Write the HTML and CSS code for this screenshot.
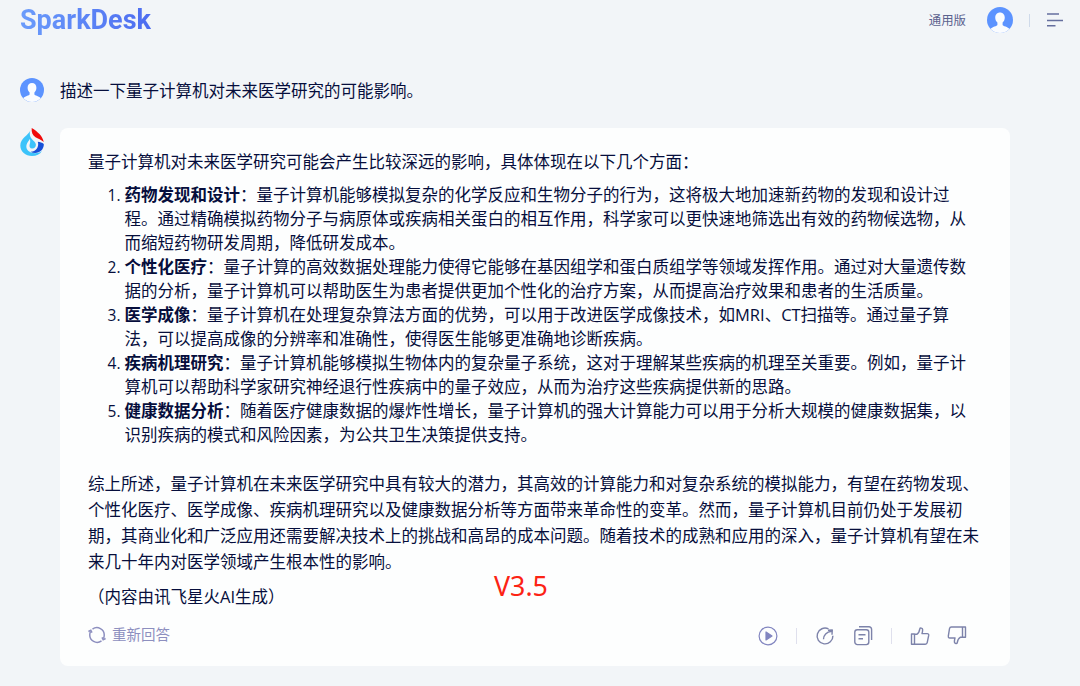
FILE: index.html
```
<!DOCTYPE html>
<html lang="zh-CN">
<head>
    <meta charset="UTF-8">
    <meta name="viewport" content="width=device-width, initial-scale=1.0">
    <title>SparkDesk</title>
    <link rel="stylesheet" href="styles.css">
</head>
<body>

    <header class="header">
        <div class="logo">SparkDesk</div>
        <div class="header-right">
            <span class="version">通用版</span>
            <svg class="avatar-large" viewBox="0 0 24 24">
                <circle cx="12" cy="12" r="12" fill="#5c93ff"/>
                <path d="M12 5c-2.700 0-4.400 2-4.400 4.700 0 2 .8 3.600 2 4.700v2.100c0 .9-5.200 1.700-6.300 3.800A12 12 0 0 0 12 24a12 12 0 0 0 8.700-3.700c-1.100-2.100-6.300-2.900-6.300-3.800v-2.100c1.200-1.100 2-2.700 2-4.700C16.400 7 14.700 5 12 5z" fill="#fafcff"/>
            </svg>
            <span class="header-line"></span>
            <svg class="menu-icon" viewBox="0 0 16 14">
                <path d="M0 1h12M0 7.500h16M0 12.800h8.500" stroke="#656f9e" stroke-width="1.400" fill="none"/>
            </svg>
        </div>
    </header>

    <main class="chat">
        <!-- Question -->
        <div class="row question">
            <svg class="avatar" viewBox="0 0 24 24">
                <circle cx="12" cy="12" r="12" fill="#5c93ff"/>
                <path d="M12 5c-2.700 0-4.400 2-4.400 4.700 0 2 .8 3.600 2 4.700v2.100c0 .9-5.200 1.700-6.300 3.800A12 12 0 0 0 12 24a12 12 0 0 0 8.700-3.700c-1.100-2.100-6.300-2.900-6.300-3.800v-2.100c1.200-1.100 2-2.700 2-4.700C16.400 7 14.700 5 12 5z" fill="#fafcff"/>
            </svg>
            <p class="question-text">描述一下量子计算机对未来医学研究的可能影响。</p>
        </div>

        <!-- Answer -->
        <div class="row">
            <svg class="spark-icon" viewBox="0 0 24 28">
                <path d="M10.300 2.500C8.500 7 .3 10.500.3 17.500.3 23.500 5.500 28 12 28c4.300 0 8-1.800 10-5-3.200 2.200-6.800 2.600-10 1.700-4.200-1.200-6.300-4.200-5.500-7.700.6-2.500 2.300-4 3.200-6 .8 1.800.6 3.500 0 5.200-.7 2.300.3 4.300 2.300 4.400 2.200.1 4-1.500 3.900-3.900-.2-3.200-4.400-4.700-5.600-8.200-.7-2.100-.6-4 0-6z" fill="#3cc3fa"/>
                <path d="M11.700 0c5.800 3.500 11 8 12 14-2.500-2.400-5.700-3-8.200-4.700C12.500 7.200 11.300 4.200 11.700 0z" fill="#f00a0a"/>
                <path d="M17.800 13.800c2.300.1 4.300.9 6 2.200.2 5.200-3.900 9-8.700 9-1.800 0-3.300-.4-4.600-1.200 5 .2 9-4.500 7.300-10z" fill="#1650d8"/>
            </svg>
            <div class="card">
                <p class="intro">量子计算机对未来医学研究可能会产生比较深远的影响，具体体现在以下几个方面：</p>
                <ol class="points">
                    <li><strong>药物发现和设计</strong>：量子计算机能够模拟复杂的化学反应和生物分子的行为，这将极大地加速新药物的发现和设计过<br>程。通过精确模拟药物分子与病原体或疾病相关蛋白的相互作用，科学家可以更快速地筛选出有效的药物候选物，从<br>而缩短药物研发周期，降低研发成本。</li>
                    <li><strong>个性化医疗</strong>：量子计算的高效数据处理能力使得它能够在基因组学和蛋白质组学等领域发挥作用。通过对大量遗传数<br>据的分析，量子计算机可以帮助医生为患者提供更加个性化的治疗方案，从而提高治疗效果和患者的生活质量。</li>
                    <li><strong>医学成像</strong>：量子计算机在处理复杂算法方面的优势，可以用于改进医学成像技术，如MRI、CT扫描等。通过量子算<br>法，可以提高成像的分辨率和准确性，使得医生能够更准确地诊断疾病。</li>
                    <li><strong>疾病机理研究</strong>：量子计算机能够模拟生物体内的复杂量子系统，这对于理解某些疾病的机理至关重要。例如，量子计<br>算机可以帮助科学家研究神经退行性疾病中的量子效应，从而为治疗这些疾病提供新的思路。</li>
                    <li><strong>健康数据分析</strong>：随着医疗健康数据的爆炸性增长，量子计算机的强大计算能力可以用于分析大规模的健康数据集，以<br>识别疾病的模式和风险因素，为公共卫生决策提供支持。</li>
                </ol>
                <p class="summary">综上所述，量子计算机在未来医学研究中具有较大的潜力，其高效的计算能力和对复杂系统的模拟能力，有望在药物发现、<br>个性化医疗、医学成像、疾病机理研究以及健康数据分析等方面带来革命性的变革。然而，量子计算机目前仍处于发展初<br>期，其商业化和广泛应用还需要解决技术上的挑战和高昂的成本问题。随着技术的成熟和应用的深入，量子计算机有望在未<br>来几十年内对医学领域产生根本性的影响。</p>
                <p class="note">（内容由讯飞星火AI生成）</p>
                <span class="version-mark">V3.5</span>

                <div class="card-footer">
                    <div class="retry">
                        <svg class="retry-icon" viewBox="0 0 18 18">
                            <path d="M4.500 3.200A7.300 7.300 0 0 1 16.200 9.500c0 1.200-.3 2.300-.8 3.200M13.500 14.800A7.300 7.300 0 0 1 1.800 8.500c0-1.200.3-2.300.8-3.200"/>
                            <path d="M.4 5.500l2.400-1.200 1.200 2.300M17.600 12.500l-2.400 1.200-1.200-2.300"/>
                        </svg>
                        <span>重新回答</span>
                    </div>
                    <div class="actions">
                        <svg class="icon play" viewBox="0 0 20 20">
                            <circle cx="10" cy="10" r="8.900"/>
                            <path d="M8 6v8l6-4z" fill="#8286c0"/>
                        </svg>
                        <span class="line"></span>
                        <svg class="icon share" viewBox="0 0 20 20">
                            <path d="M13.500 2.900A7.900 7.900 0 1 0 17.900 9.700"/>
                            <path d="M8.500 13.200c0-3.800 3-7.300 8-7.900M13 4.200l4.300-.2-.3 4.700"/>
                        </svg>
                        <svg class="icon copy" viewBox="0 0 20 20">
                            <rect x="1.800" y="3.800" width="14" height="14.800" rx="2.500"/>
                            <path d="M6 .8h10a2.600 2.600 0 0 1 2.600 2.600v10.500M5.500 8.800h7M5.500 12.800h4.500"/>
                        </svg>
                        <span class="line"></span>
                        <svg class="icon up" viewBox="0 0 20 20">
                            <path d="M1.500 8h3v10.300h-3zM4.500 8.300h2.300c2.100-1.200 2.700-3.500 3-5.500.2-1.100 2.600-1 2.800.6.2 1.500-.2 2.900-.6 4.200h5.200c1.100 0 1.700.7 1.500 1.800l-1.500 7.300c-.2 1-.9 1.600-1.900 1.600H4.500"/>
                        </svg>
                        <svg class="icon down" viewBox="0 0 20 20">
                            <path d="M18.500 1h-3v10.300h3zM15.500 11.300h-2.300c-2.100 1.200-2.700 3.500-3 5.500-.2 1.100-2.600 1-2.800-.6-.2-1.500.2-2.900.6-4.200H2.800c-1.100 0-1.700-.7-1.500-1.800l1.200-7.600c.2-1 .9-1.600 1.900-1.600h11.100"/>
                        </svg>
                    </div>
                </div>
            </div>
        </div>
    </main>

</body>
</html>
```

FILE: styles.css
```
/* Page */
body {
    margin: 0;
    height: 686px;
    overflow: hidden;
    background-color: #f2f5f8;
    color: #060e3c;
    font-family: "Open Sans", "Noto Sans CJK SC", sans-serif;
    font-size: 16.5px;
    text-spacing-trim: space-all;
}

p {
    margin: 0;
}

svg {
    display: block;
    flex-shrink: 0;
}

/* Header */
.header {
    display: flex;
    justify-content: space-between;
    align-items: center;
    height: 40px;
    padding: 0 17px 0 20px;
}

.logo {
    font-family: Roboto, sans-serif;
    font-size: 27px;
    font-weight: 700;
    line-height: 36px;
    color: transparent;
    background: linear-gradient(90deg, #6b9cfb, #4d6cf0);
    -webkit-background-clip: text;
    background-clip: text;
}

.header-right {
    display: flex;
    align-items: center;
}

.version {
    font-size: 12.4px;
    color: #5b628f;
}

.avatar-large {
    width: 26px;
    height: 26px;
    margin-left: 21px;
}

.header-line {
    width: 1px;
    height: 13px;
    margin: 0 17px 0 16px;
    background-color: #cfdaea;
}

.menu-icon {
    width: 16px;
    height: 14px;
}

/* Conversation */
.chat {
    padding: 38px 20px 0;
}

.row {
    display: flex;
    align-items: flex-start;
    gap: 16px;
}

.question {
    height: 50px;
}

.avatar {
    width: 24px;
    height: 24px;
}

.question-text {
    line-height: 26px;
}

.spark-icon {
    width: 24px;
    height: 28px;
}

.card {
    position: relative;
    box-sizing: border-box;
    width: 950px;
    height: 538px;
    padding: 21px 28px 0;
    background-color: #fdfefe;
    border-radius: 8px;
    white-space: nowrap;
}

.intro,
.summary,
.note {
    line-height: 26px;
}

.points {
    margin: 8px 0 24px;
    padding-left: 36.5px;
    line-height: 24px;
}

.points li::marker {
    font-size: 15.5px;
}

.note {
    margin-top: 9px;
}

.version-mark {
    position: absolute;
    left: 434px;
    top: 440px;
    font-family: "Noto Sans", sans-serif;
    font-size: 26.8px;
    line-height: 36px;
    color: #fc2314;
}

/* Card footer */
.card-footer {
    display: flex;
    justify-content: space-between;
    align-items: center;
    height: 24px;
    margin-top: 14px;
    padding-right: 15px;
}

.retry {
    display: flex;
    align-items: center;
    gap: 6px;
    margin-bottom: 3px;
    font-size: 14.5px;
    line-height: 24px;
    color: #8d8fbf;
}

.retry-icon {
    width: 18px;
    height: 18px;
    fill: none;
    stroke: #8d8fbf;
    stroke-width: 1.5;
}

.actions {
    display: flex;
    align-items: center;
}

.icon {
    width: 20px;
    height: 20px;
    fill: none;
    stroke: #7d83aa;
    stroke-width: 1.4;
    stroke-linejoin: round;
}

.play {
    stroke: #8286c0;
    stroke-width: 1.2;
}

.line {
    width: 1px;
    height: 16px;
    margin: 0 18px;
    background-color: #dfe0ed;
}

.copy {
    margin-left: 18px;
}

.down {
    margin-left: 17px;
}
```
